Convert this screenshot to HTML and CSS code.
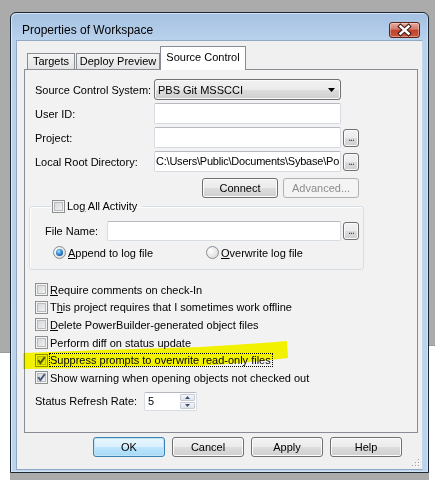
FILE: index.html
```html
<!DOCTYPE html>
<html lang="en">
<head>
<meta charset="utf-8">
<title>Properties of Workspace</title>
<link rel="stylesheet" href="styles.css">
</head>
<body>
<div class="desk desk-left"></div>
<div class="desk desk-right"></div>
<div class="window">
  <div class="titlebar">
    <span class="title">Properties of Workspace</span>
    <div class="close-btn">
      <svg width="29" height="14" viewBox="0 0 29 14">
        <path d="M10.5 3.5 L18.5 10.5 M18.5 3.5 L10.5 10.5" stroke="#3b1b16" stroke-width="4.5" stroke-linecap="square"/>
        <path d="M10.5 3.5 L18.5 10.5 M18.5 3.5 L10.5 10.5" stroke="#ffffff" stroke-width="2.4" stroke-linecap="square"/>
      </svg>
    </div>
  </div>
  <div class="client">
    <div class="tabs">
      <div class="tab tab-targets">Targets</div>
      <div class="tab tab-deploy">Deploy Preview</div>
      <div class="tab tab-source active">Source Control</div>
    </div>
    <div class="panel">
      <div class="form-row">
        <span class="lbl">Source Control System:</span>
        <div class="select">
          <span>PBS Git MSSCCI</span>
          <svg class="arrow" width="7" height="4" viewBox="0 0 7 4"><path d="M0 0H7L3.5 4Z" fill="#000"/></svg>
        </div>
      </div>
      <div class="form-row">
        <span class="lbl">User ID:</span>
        <div class="input"></div>
      </div>
      <div class="form-row">
        <span class="lbl">Project:</span>
        <div class="input"></div>
        <div class="browse">...</div>
      </div>
      <div class="form-row">
        <span class="lbl">Local Root Directory:</span>
        <div class="input"><span class="val">C:\Users\Public\Documents\Sybase\Po</span></div>
        <div class="browse">...</div>
      </div>
      <div class="btnrow">
        <div class="btn">Connect</div>
        <div class="btn disabled">Advanced...</div>
      </div>
      <fieldset class="group">
        <legend class="group-legend"><span class="cb"></span><span>Lo<u>g</u> All Activity</span></legend>
        <div class="file-row">
          <span class="lbl-file">File Name:</span>
          <div class="input input-file"></div>
          <div class="browse">...</div>
        </div>
        <div class="radio-row">
          <div class="radio-item radio-append"><span class="radio on"></span><span><u>A</u>ppend to log file</span></div>
          <div class="radio-item"><span class="radio"></span><span><u>O</u>verwrite log file</span></div>
        </div>
      </fieldset>
      <div class="checks">
        <div class="check"><span class="cb"></span><span><u>R</u>equire comments on check-In</span></div>
        <div class="check"><span class="cb"></span><span>T<u>h</u>is project requires that I sometimes work offline</span></div>
        <div class="check"><span class="cb"></span><span><u>D</u>elete PowerBuilder-generated object files</span></div>
        <div class="check"><span class="cb"></span><span>Perform diff on status update</span></div>
        <div class="check"><span class="cb checked"><svg width="13" height="13" viewBox="0 0 13 13"><path d="M3.2 6.2 L5.4 9 L9.8 3.2" fill="none" stroke="#4b5b7f" stroke-width="2"/></svg></span><span class="focus">Suppress prompts to overwrite read-only files</span></div>
        <div class="check"><span class="cb checked"><svg width="13" height="13" viewBox="0 0 13 13"><path d="M3.2 6.2 L5.4 9 L9.8 3.2" fill="none" stroke="#4b5b7f" stroke-width="2"/></svg></span><span>Show warning when opening objects not checked out</span></div>
      </div>
      <div class="status-row">
        <span class="lbl-status">Status Refresh Rate:</span>
        <div class="spin">
          <span class="spin-val">5</span>
          <div class="spin-btns">
            <div class="spin-btn"><svg width="7" height="4" viewBox="0 0 7 4"><path d="M0 4H7L3.5 0Z" fill="#3c4f7a"/></svg></div>
            <div class="spin-btn"><svg width="7" height="4" viewBox="0 0 7 4"><path d="M0 0H7L3.5 4Z" fill="#3c4f7a"/></svg></div>
          </div>
        </div>
      </div>
    </div>
    <div class="footer">
      <div class="btn default">OK</div>
      <div class="btn">Cancel</div>
      <div class="btn">Apply</div>
      <div class="btn">Help</div>
    </div>
    <svg class="grip" width="10" height="10" viewBox="0 0 10 10">
      <g fill="#ffffff"><rect x="9" y="3" width="1" height="1"/><rect x="9" y="6" width="1" height="1"/><rect x="6" y="6" width="1" height="1"/><rect x="9" y="9" width="1" height="1"/><rect x="6" y="9" width="1" height="1"/><rect x="3" y="9" width="1" height="1"/></g>
      <g fill="#a0a0a0"><rect x="8" y="2" width="1" height="1"/><rect x="8" y="5" width="1" height="1"/><rect x="5" y="5" width="1" height="1"/><rect x="8" y="8" width="1" height="1"/><rect x="5" y="8" width="1" height="1"/><rect x="2" y="8" width="1" height="1"/></g>
    </svg>
  </div>
</div>
<svg class="highlight" width="435" height="480" viewBox="0 0 435 480">
  <path d="M23 353 L100 350 L200 347 L232 345 L262 343 L287 341 L288 358 L270 360 L240 363 L200 366 L100 368 L23 369 Z" fill="#ffff00"/>
</svg>
</body>
</html>
```
FILE: styles.css
```css
* { box-sizing: border-box; }
html, body { margin: 0; }
body {
  position: relative;
  width: 435px;
  height: 480px;
  overflow: hidden;
  background: #ababab;
  padding: 12px 0 0 10px;
  font: 11px "Liberation Sans", Arial, sans-serif;
  color: #000;
}
.desk { position: absolute; background: #ffffff; }
.desk-left { left: 0; top: 352px; width: 10px; height: 128px; border-top: 1px solid #9a9a9a; }
.desk-right { left: 429px; top: 345px; width: 6px; height: 135px; border-top: 1px solid #9a9a9a; }

.window {
  position: relative;
  z-index: 1;
  width: 419px;
  height: 461px;
  border: 1px solid #1d2733;
  border-radius: 6px 6px 0 0;
  background: linear-gradient(#a5c1e2, #b9d2ec 28px, #bcd5ee);
  box-shadow: inset 1px 1px 0 rgba(255,255,255,0.55), inset -1px -1px 0 rgba(255,255,255,0.35);
  padding: 0 5px 2px 5px;
  display: flex;
  flex-direction: column;
}
.titlebar {
  position: relative;
  height: 27px;
  padding: 10px 0 0 6px;
  flex: none;
}
.title { font: 12px/14px "Liberation Sans", Arial, sans-serif; color: #000; }
.close-btn {
  position: absolute;
  top: 9px;
  right: 3px;
  width: 31px;
  height: 16px;
  border: 1px solid #5e2219;
  border-radius: 3px;
  background: linear-gradient(#e6aa9e, #d27a68 45%, #c2412c 50%, #c9573f 100%);
  box-shadow: inset 0 0 0 1px rgba(255,255,255,0.35);
}
.close-btn svg { display: block; }

.client {
  position: relative;
  flex: 1;
  border: 1px solid #93a8c2;
  border-right-color: #c3d6ea;
  background: #f0f0f0;
  padding-top: 5px;
}
.tabs {
  display: flex;
  align-items: flex-end;
  height: 23px;
  margin-left: 10px;
  position: relative;
  z-index: 1;
}
.tab {
  height: 16px;
  border: 1px solid #898c95;
  border-bottom: none;
  background: linear-gradient(#f4f4f4, #e4e4e4);
  text-align: center;
  line-height: 14px;
}
.tab-targets { width: 48px; margin-right: 1px; }
.tab-deploy { width: 84px; }
.tab.active {
  width: 86px;
  height: 24px;
  margin-bottom: -1px;
  background: #ffffff;
  line-height: 21px;
}

.panel {
  height: 364px;
  margin: 0 4px 0 7px;
  border: 1px solid #898c95;
  background: #f2f2f2;
  padding: 9px 0 0 10px;
}
.form-row {
  display: flex;
  align-items: center;
  height: 21px;
  margin-bottom: 3px;
}
.lbl { width: 119px; flex: none; }
.select {
  width: 187px;
  height: 21px;
  border: 1px solid #707070;
  border-radius: 3px;
  background: linear-gradient(#f2f2f2, #ebebeb 50%, #dddddd 50%, #cfcfcf);
  box-shadow: inset 0 0 0 1px #fafafa;
  display: flex;
  align-items: center;
  justify-content: space-between;
  padding: 0 5px 0 3px;
}
.arrow { display: block; }
.input {
  width: 187px;
  height: 21px;
  background: #ffffff;
  border: 1px solid #d7dbe2;
  border-top-color: #b6b9c0;
  border-radius: 2px;
  overflow: hidden;
  white-space: nowrap;
  padding: 3px 0 0 1px;
}
.val { letter-spacing: -0.22px; }
.browse {
  width: 16px;
  height: 18px;
  margin-left: 2px;
  border: 1px solid #707070;
  border-radius: 3px;
  background: linear-gradient(#f2f2f2, #ebebeb 50%, #dddddd 50%, #cfcfcf);
  box-shadow: inset 0 0 0 1px #fafafa;
  color: #1c2a6a;
  text-align: center;
  font-size: 10px;
  line-height: 16px;
  letter-spacing: -1px;
}
.btnrow {
  display: flex;
  justify-content: flex-end;
  gap: 5px;
  width: 324px;
  margin-top: 6px;
}
.btn {
  width: 76px;
  height: 20px;
  border: 1px solid #707070;
  border-radius: 3px;
  background: linear-gradient(#f2f2f2, #ebebeb 50%, #dddddd 50%, #cfcfcf);
  box-shadow: inset 0 0 0 1px #fcfcfc;
  text-align: center;
  line-height: 18px;
}
.btn.disabled {
  border-color: #adb2b5;
  background: #f4f4f4;
  box-shadow: none;
  color: #8d8d8d;
}
.btn.default {
  border-color: #3c7fb1;
  background: linear-gradient(#eaf6fd, #d9f0fc 50%, #bee6fd 50%, #a7d9f5);
  box-shadow: inset 0 0 0 1px #bfe3f8;
}

.group {
  margin: 1px 0 0 -6px;
  width: 335px;
  height: 71px;
  border: 1px solid #d5dfe5;
  border-radius: 3px;
  box-shadow: inset 1px 1px 0 #ffffff;
  padding: 8px 0 0 15px;
  min-width: 0;
}
.group-legend {
  margin-left: 6px;
  padding: 0 5px 0 1px;
  height: 14px;
  display: flex;
  align-items: center;
  gap: 2px;
}
.cb {
  position: relative;
  width: 13px;
  height: 13px;
  flex: none;
  border: 1px solid #8e8f8f;
  background: linear-gradient(135deg, #cfd1d4, #f7f7f7);
  box-shadow: inset 0 0 0 1px #f4f4f4, inset 0 0 0 2px #b9bcc1;
}
.cb svg { position: absolute; left: -1px; top: -1px; }
.file-row { display: flex; align-items: center; height: 20px; }
.lbl-file { width: 62px; flex: none; }
.input-file { width: 234px; height: 20px; }
.radio-row { display: flex; margin: 5px 0 0 8px; height: 13px; }
.radio-item { display: flex; align-items: center; gap: 2px; }
.radio-append { width: 153px; }
.radio {
  width: 13px;
  height: 13px;
  border-radius: 50%;
  border: 1px solid #8a8d92;
  background: radial-gradient(circle at 35% 35%, #ffffff, #dfe0e2 70%, #cfd1d4);
  position: relative;
}
.radio.on::after {
  content: "";
  position: absolute;
  left: 2px;
  top: 2px;
  width: 7px;
  height: 7px;
  border-radius: 50%;
  background: radial-gradient(circle at 40% 35%, #aee0ff, #2f8ad4 45%, #0d3f7a);
}

.checks { margin-top: 11px; }
.check {
  display: flex;
  align-items: center;
  gap: 2px;
  height: 17.6px;
}
.focus { border: 1px dotted #000; padding: 0 1px 0 0; margin-left: -1px; line-height: 12px; }

.status-row { display: flex; align-items: center; margin-top: 5px; height: 19px; }
.lbl-status { width: 109px; flex: none; }
.spin {
  width: 53px;
  height: 19px;
  background: #fff;
  border: 1px solid #d7dbe2;
  border-top-color: #b6b9c0;
  border-radius: 2px;
  display: flex;
  align-items: center;
  justify-content: space-between;
  padding: 0 1px 0 3px;
}
.spin-btns { display: flex; flex-direction: column; gap: 1px; }
.spin-btn {
  width: 15px;
  height: 7px;
  border: 1px solid #c5cbd3;
  border-radius: 1px;
  background: linear-gradient(#f6f8fb, #dde3ea);
  display: flex;
  align-items: center;
  justify-content: center;
}
.spin-btn svg { display: block; width: 5px; height: 3px; }

.footer {
  display: flex;
  justify-content: flex-end;
  gap: 7px;
  margin: 4px 20px 0 0;
}
.footer .btn { width: 72px; }
.grip { position: absolute; right: 2px; bottom: 2px; }

.highlight {
  position: absolute;
  left: 0;
  top: 0;
  z-index: 2;
  mix-blend-mode: multiply;
  pointer-events: none;
}
```
